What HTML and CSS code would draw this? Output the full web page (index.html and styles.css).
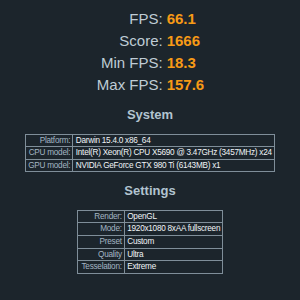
FILE: index.html
```html
<!DOCTYPE html>
<html>
<head>
<meta charset="utf-8">
<link rel="stylesheet" href="styles.css">
</head>
<body>
<div class="scores">
  <span class="lbl">FPS:</span><span class="val">66.1</span>
  <span class="lbl">Score:</span><span class="val">1666</span>
  <span class="lbl">Min FPS:</span><span class="val">18.3</span>
  <span class="lbl">Max FPS:</span><span class="val">157.6</span>
</div>
<h2 class="heading system-h">System</h2>
<table class="info system">
  <tr><td class="k">Platform:</td><td class="v">Darwin 15.4.0 x86_64</td></tr>
  <tr><td class="k">CPU model:</td><td class="v">Intel(R) Xeon(R) CPU X5690 @ 3.47GHz (3457MHz) x24</td></tr>
  <tr><td class="k">GPU model:</td><td class="v">NVIDIA GeForce GTX 980 Ti (6143MB) x1</td></tr>
</table>
<h2 class="heading settings-h">Settings</h2>
<table class="info settings">
  <tr><td class="k">Render:</td><td class="v">OpenGL</td></tr>
  <tr><td class="k">Mode:</td><td class="v">1920x1080 8xAA fullscreen</td></tr>
  <tr><td class="k">Preset</td><td class="v">Custom</td></tr>
  <tr><td class="k">Quality</td><td class="v">Ultra</td></tr>
  <tr><td class="k">Tesselation:</td><td class="v">Extreme</td></tr>
</table>
</body>
</html>
```
FILE: styles.css
```css
html, body {
  background: #1c252c;
}
body {
  margin: 8px 0 0 0;
  font-family: "Liberation Sans", Arial, sans-serif;
  color: #c0cdd6;
}
.scores {
  display: grid;
  grid-template-columns: auto auto;
  justify-content: center;
  column-gap: 4px;
  font-size: 15px;
  line-height: 21.7px;
  padding-top: 0.4px;
  margin-left: 1px;
}
.lbl {
  text-align: right;
  color: #bfccd5;
}
.val {
  text-align: left;
  color: #f79a16;
  font-weight: bold;
}
.heading {
  margin: 0;
  text-align: center;
  font-size: 13px;
  line-height: 15px;
  font-weight: bold;
  color: #b2c4d0;
}
.system-h {
  margin-top: 12.2px;
}
.settings-h {
  margin-top: 10.8px;
}
.info {
  border-collapse: collapse;
  margin: 0 auto;
  font-size: 8.2px;
  line-height: 9.6px;
  letter-spacing: -0.25px;
}
.system {
  margin-top: 11.3px;
}
.settings {
  margin-top: 11.6px;
}
.info td {
  border: 1px solid #7f8e99;
  padding: 1px 2px;
  white-space: nowrap;
}
.info td.k {
  text-align: right;
  color: #a3b5c3;
}
.info td.v {
  text-align: left;
  color: #f0f4f7;
  padding-left: 2.5px;
}
.system td.k {
  width: 41px;
}
.settings td.k {
  width: 42px;
}
.settings td.v {
  width: 93px;
}
```
